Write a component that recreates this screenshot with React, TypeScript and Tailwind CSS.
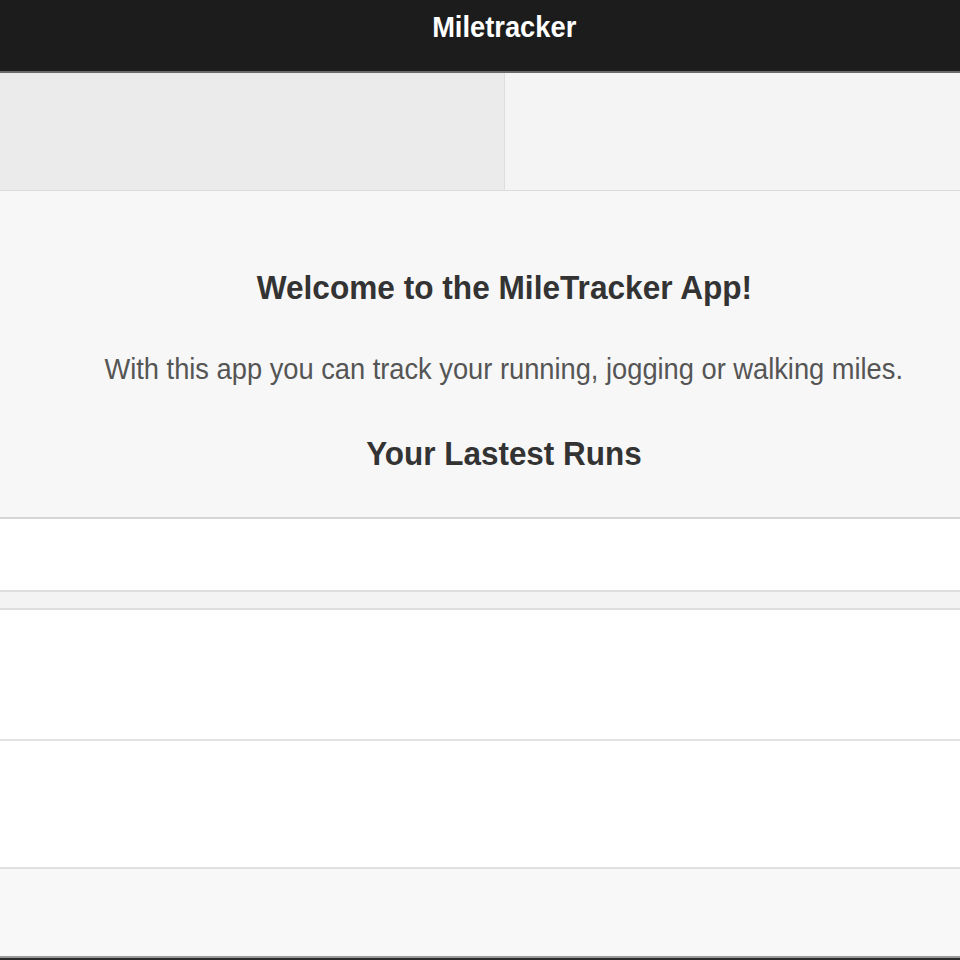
import React from "react";

export default function App() {
  const font = { fontFamily: '"Liberation Sans", Arial, sans-serif' };
  return (
    <div className="w-[960px] h-[960px] overflow-hidden bg-[#f7f7f7]" style={font}>
      <div className="w-[1008px] flex flex-col">
        <header className="h-[73px] bg-[#1c1c1c] border-b-2 border-[#6a6a6a] flex items-center justify-center">
          <h1 className="text-[30px] font-bold text-white scale-x-[0.91] leading-none -mt-[18px]">Miletracker</h1>
        </header>
        <nav className="h-[118px] flex border-b border-[#dcdcdc]">
          <div className="w-[505px] bg-[#ebebeb] border-r border-[#dedede]" />
          <div className="flex-1 bg-[#f4f4f4]" />
        </nav>
        <section className="h-[326px] bg-[#f7f7f7] flex flex-col items-center pt-[74px]">
          <h2 className="text-[34px] font-bold text-[#333] leading-[44px] scale-x-[0.93]">Welcome to the MileTracker App!</h2>
          <p className="mt-[40px] text-[29px] text-[#555] leading-[40px] scale-x-[0.94]">With this app you can track your running, jogging or walking miles.</p>
          <h3 className="mt-[42px] text-[34px] font-bold text-[#333] leading-[44px] scale-x-[0.925]">Your Lastest Runs</h3>
        </section>
        <ul className="flex flex-col">
          <li className="h-[73px] bg-white border-t-2 border-[#d6d6d6]" />
          <li className="h-[20px] bg-[#f3f3f3] border-t-2 border-[#dddddd] border-b-2 border-b-[#dddddd]" />
          <li className="h-[129px] bg-white" />
          <li className="h-[128px] bg-white border-t-2 border-[#e2e2e2]" />
          <li className="h-[89px] bg-[#f8f8f8] border-t-2 border-[#e0e0e0]" />
          <li className="h-[10px] bg-[#2a2a2a] border-t-2 border-[#9a9a9a]" />
        </ul>
      </div>
    </div>
  );
}
